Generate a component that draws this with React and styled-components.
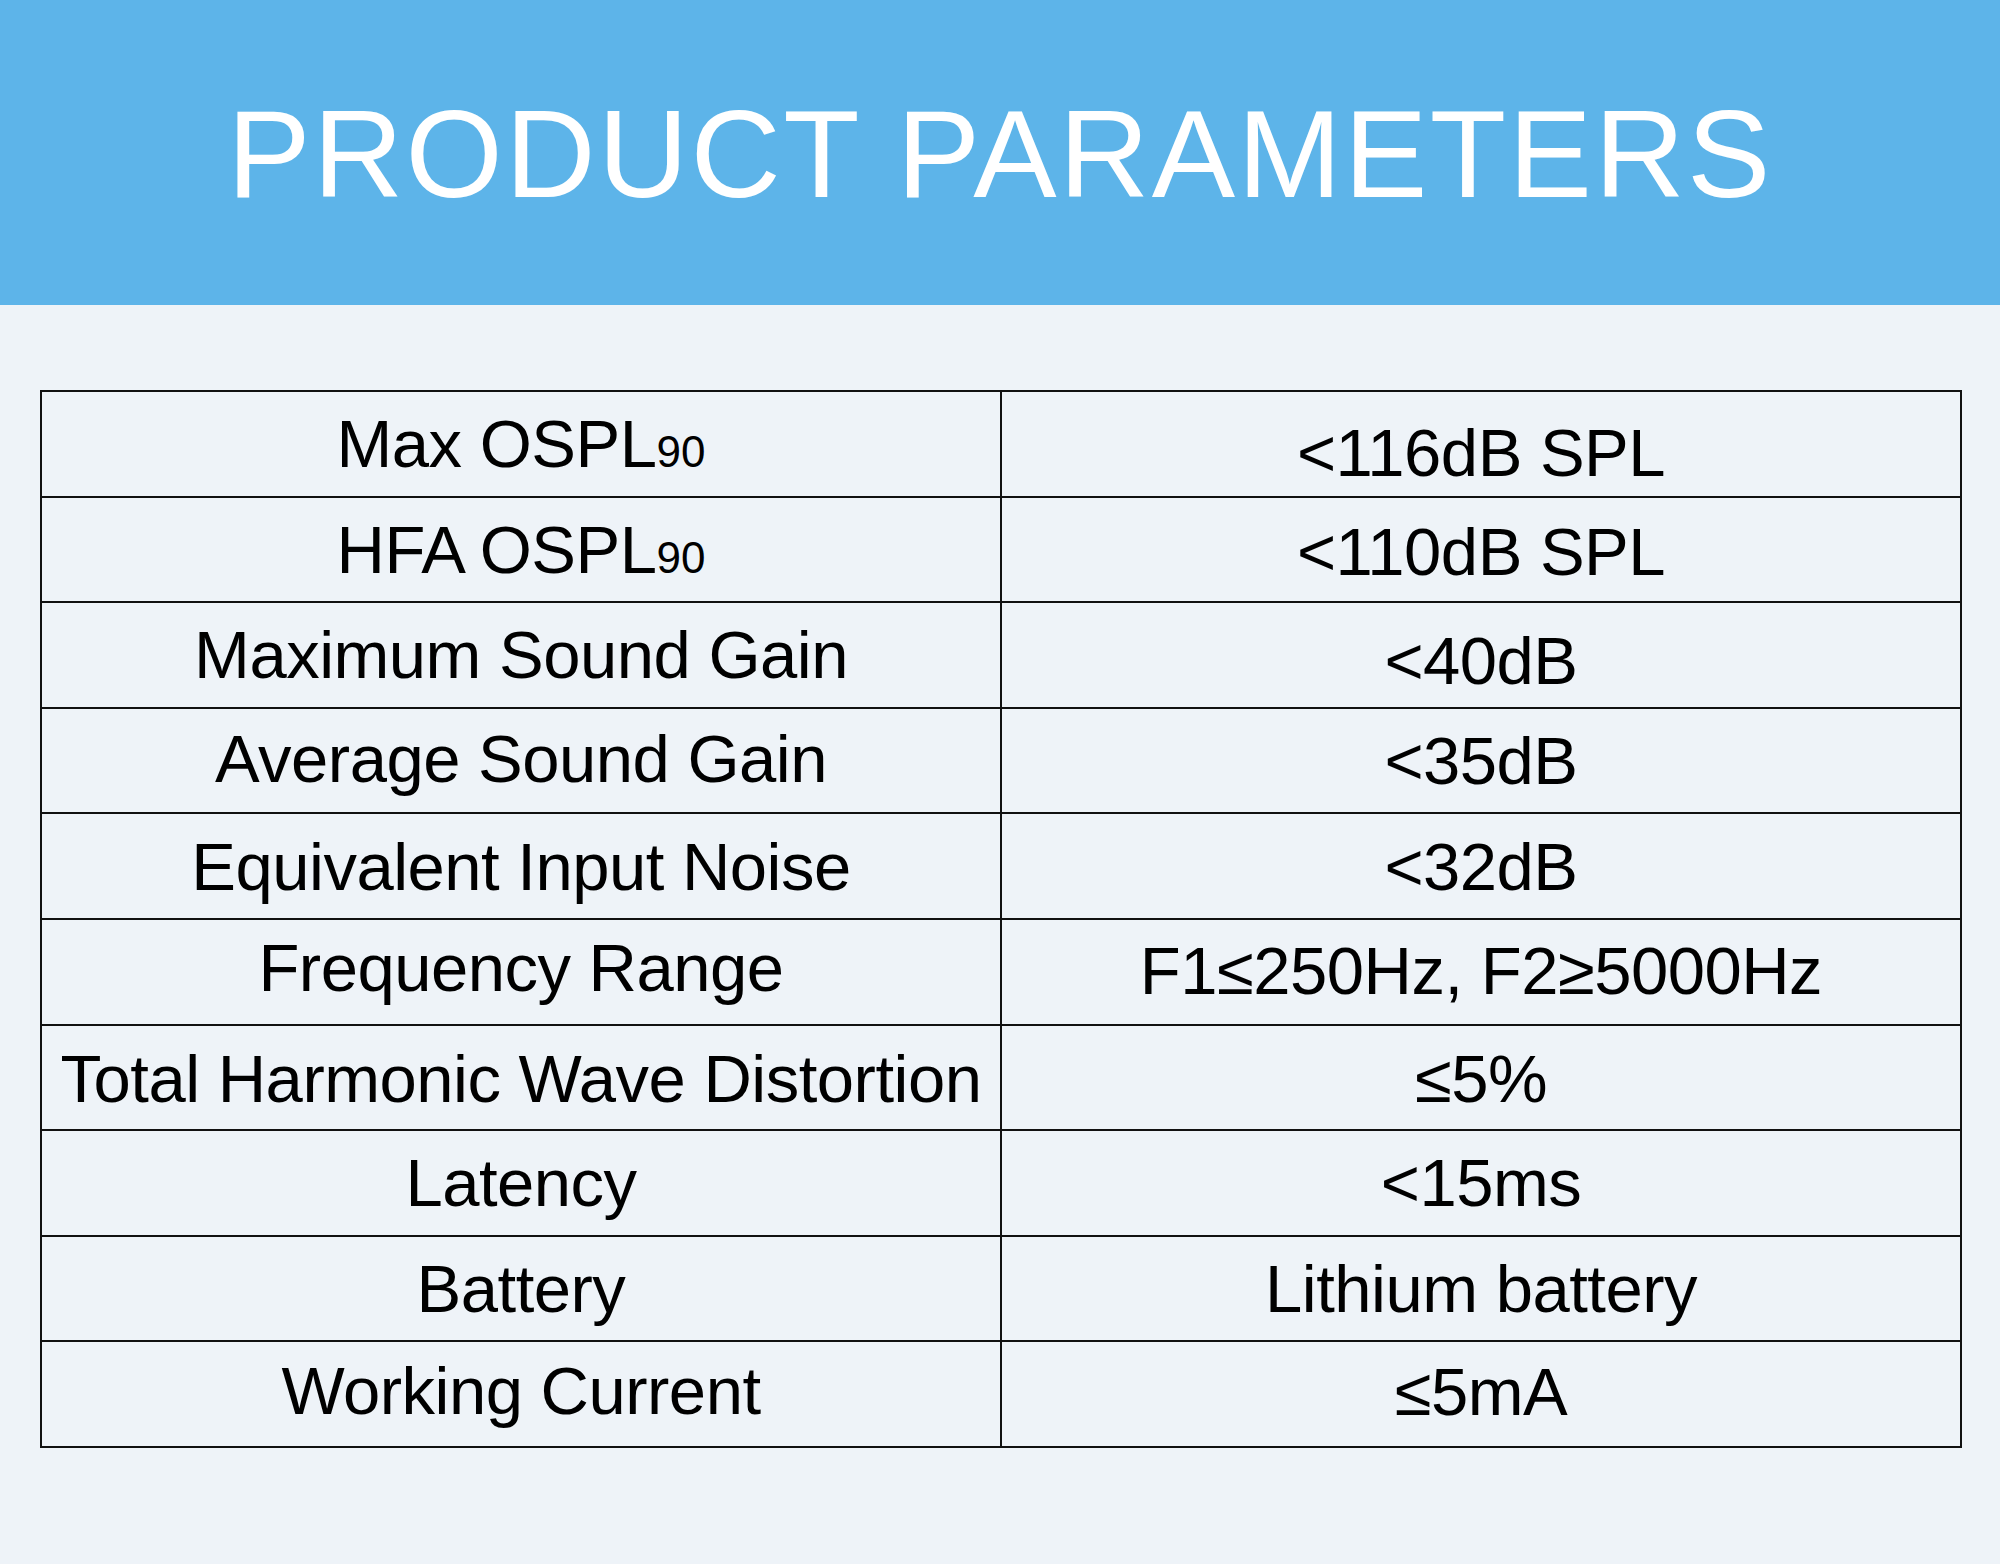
import React from "react";
import styled, { createGlobalStyle } from "styled-components";

const Global = createGlobalStyle`
  html, body { margin: 0; padding: 0; }
  body {
    background: #eef3f8;
    font-family: "Liberation Sans", Arial, sans-serif;
  }
`;

const Page = styled.div`
  width: 2000px;
  height: 1564px;
  background: #eef3f8;
  display: flex;
  flex-direction: column;
`;

const Header = styled.header`
  height: 305px;
  flex: none;
  background: #5db4e9;
  display: flex;
  align-items: center;
  justify-content: center;
  padding-top: 1px;
  box-sizing: border-box;
`;

const Title = styled.h1`
  margin: 0;
  color: #ffffff;
  font-family: "Liberation Sans", Arial, sans-serif;
  font-weight: 400;
  font-size: 125px;
  line-height: 1;
  letter-spacing: 2.4px;
  white-space: nowrap;
`;

const Body = styled.main`
  padding: 85px 38px 0 40px;
`;

const Table = styled.div`
  display: grid;
  grid-template-columns: 960px 960px;
  grid-auto-rows: 105.6px;
  border-top: 2px solid #111;
  border-left: 2px solid #111;
  width: 1922px;
  box-sizing: border-box;
`;

const Cell = styled.div`
  border-right: 2px solid #111;
  border-bottom: 2px solid #111;
  box-sizing: border-box;
  display: flex;
  align-items: center;
  justify-content: center;
  color: #000;
  font-size: 67px;
  line-height: 1;
  letter-spacing: -0.5px;
  white-space: nowrap;
`;

const CellText = styled.span`
  position: relative;
  top: ${(p) => p.$shift || 0}px;
`;

const Sub = styled.span`
  font-size: 44px;
  letter-spacing: 0;
`;

const rows = [
  { label: <>Max OSPL<Sub>90</Sub></>, value: "<116dB SPL", ls: 0, vs: 9 },
  { label: <>HFA OSPL<Sub>90</Sub></>, value: "<110dB SPL", ls: 0, vs: 2 },
  { label: "Maximum Sound Gain", value: "<40dB", ls: 0, vs: 6 },
  { label: "Average Sound Gain", value: "<35dB", ls: -2, vs: 0 },
  { label: "Equivalent Input Noise", value: "<32dB", ls: 0, vs: 0 },
  { label: "Frequency Range", value: "F1≤250Hz, F2≥5000Hz", ls: -4, vs: -1 },
  { label: "Total Harmonic Wave Distortion", value: "≤5%", ls: 1, vs: 1 },
  { label: "Latency", value: "<15ms", ls: 0, vs: 0 },
  { label: "Battery", value: "Lithium battery", ls: 0, vs: 0 },
  { label: "Working Current", value: "≤5mA", ls: -4, vs: -3 },
];

export default function App() {
  return (
    <Page>
      <Global />
      <Header>
        <Title>PRODUCT PARAMETERS</Title>
      </Header>
      <Body>
        <Table>
          {rows.map((r, i) => (
            <React.Fragment key={i}>
              <Cell>
                <CellText $shift={r.ls}>{r.label}</CellText>
              </Cell>
              <Cell>
                <CellText $shift={r.vs}>{r.value}</CellText>
              </Cell>
            </React.Fragment>
          ))}
        </Table>
      </Body>
    </Page>
  );
}
